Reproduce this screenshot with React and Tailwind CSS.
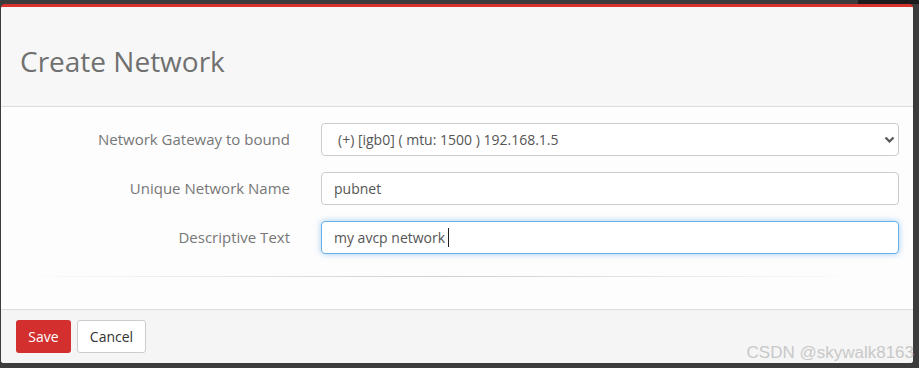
import React from "react";

const font = { fontFamily: '"Open Sans", "Noto Sans", sans-serif' };

function Row({ label, children }) {
  return (
    <div className="flex items-center h-[33px]">
      <div className="w-[289px] text-right text-[15px] text-[#777]">{label}</div>
      <div className="flex-1 ml-[31px]">{children}</div>
    </div>
  );
}

export default function App() {
  return (
    <div className="relative w-[919px] h-[368px] bg-[#3c3c3c] flex flex-col" style={font}>
      <div className="h-[4px] flex justify-end">
        <div className="w-[61px] h-[4px] bg-[#1c1c1c]" />
      </div>
      <div className="ml-[1px] mr-[6px] h-[359px] flex flex-col rounded-t-[4px] rounded-b-[3px] overflow-hidden border-t-[3px] border-[#d8322c] bg-white">
        <div className="h-[100px] flex items-center px-[19px] bg-[#f7f7f7] border-b border-[#dddddd]">
          <h1 className="text-[28px] font-normal text-[#707070] mt-[9px]">Create Network</h1>
        </div>
        <div className="h-[202px] bg-[#fdfdfd] pt-[16px] pr-[14px] flex flex-col">
          <div className="flex flex-col gap-[16px]">
            <Row label="Network Gateway to bound">
              <div className="h-[33px] border border-[#cccccc] rounded-[4px] bg-white flex items-center pl-[16px] pr-[3px] text-[14px] text-[#555]">
                <span className="flex-1">(+) [igb0] ( mtu: 1500 ) 192.168.1.5</span>
                <svg width="11" height="8" viewBox="0 0 11 8">
                  <path d="M1.5 1.5 L5.5 5.5 L9.5 1.5" fill="none" stroke="#555" strokeWidth="2.2" />
                </svg>
              </div>
            </Row>
            <Row label="Unique Network Name">
              <div className="h-[33px] border border-[#cccccc] rounded-[4px] bg-white flex items-center px-[12px] text-[14px] text-[#555]">
                pubnet
              </div>
            </Row>
            <Row label="Descriptive Text">
              <div className="h-[33px] border border-[#66afe9] rounded-[4px] bg-white flex items-center px-[12px] text-[14px] text-[#555] shadow-[0_0_6px_rgba(102,175,233,0.6)]">
                <span>my avcp network</span>
                <span className="ml-[3px] w-px h-[19px] bg-[#222]" />
              </div>
            </Row>
          </div>
          <div className="mt-[22px] ml-[14px] mr-[30px] h-px bg-gradient-to-r from-transparent via-[#cfcfcf] to-transparent" />
        </div>
        <div className="flex-1 bg-[#f5f5f5] border-t border-[#dddddd] pt-[10px] pl-[15px] flex gap-[6px] items-start">
          <button className="h-[33px] w-[55px] rounded-[3px] bg-[#d32f2f] text-white text-[14px]">Save</button>
          <button className="h-[33px] w-[69px] rounded-[3px] bg-white border border-[#cccccc] text-[#333] text-[14px]">Cancel</button>
        </div>
      </div>
      <div
        className="absolute right-[5px] bottom-[7px] text-[17px] leading-none text-[#c8c8c8]"
        style={{ fontFamily: '"Liberation Sans", Arial, sans-serif' }}
      >
        CSDN @skywalk8163
      </div>
    </div>
  );
}
